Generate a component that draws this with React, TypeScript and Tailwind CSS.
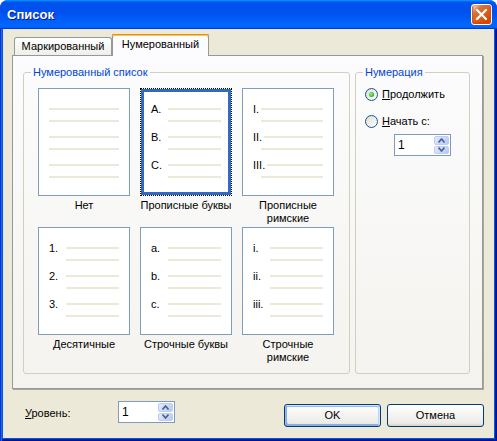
import React from "react";

function Line({ className = "" }: { className?: string }) {
  return <div className={"h-[2px] bg-[#ECE9D8] " + className} />;
}

function PlainLines() {
  return (
    <div className="flex flex-col px-[10px] pt-[19px]">
      <Line />
      <Line className="mt-[10px]" />
      <Line className="mt-[14px]" />
      <Line className="mt-[10px]" />
      <Line className="mt-[14px]" />
      <Line className="mt-[10px]" />
    </div>
  );
}

function Labeled({ labels, tight }: { labels: string[]; tight?: boolean }) {
  return (
    <div className="flex flex-col">
      {labels.map((l, i) => (
        <div key={i} className={i > 0 ? "mt-[14px]" : ""}>
          <div className="flex h-[2px] items-center">
            {tight ? (
              <span className="shrink-0 pr-[2px] leading-[13px]">{l}</span>
            ) : (
              <span className="w-[17px] shrink-0 leading-[13px]">{l}</span>
            )}
            <div className="h-[2px] flex-1 bg-[#ECE9D8]" />
          </div>
          <div className={(tight ? "ml-[8px]" : "ml-[17px]") + " mt-[10px] h-[2px] bg-[#ECE9D8]"} />
        </div>
      ))}
    </div>
  );
}

function Box({ children, selected }: { children: React.ReactNode; selected?: boolean }) {
  if (selected) {
    return (
      <div className="h-[108px] w-[92px] border border-dotted border-black bg-white">
        <div className="h-full w-full border-[3px] border-[#316AC5] bg-white px-[7px] pt-[16px]">{children}</div>
      </div>
    );
  }
  return <div className="h-[108px] w-[92px] border border-[#7F9DB9] bg-white">{children}</div>;
}

function Cell({ box, label }: { box: React.ReactNode; label: React.ReactNode }) {
  return (
    <div className="flex flex-col">
      {box}
      <div className="mt-[3px] h-[26px] text-center leading-[13px]">{label}</div>
    </div>
  );
}

function SpinArrow({ up }: { up?: boolean }) {
  return (
    <svg width="7" height="5" viewBox="0 0 7 5">
      {up ? (
        <path d="M0.5 4.5 L3.5 1 L6.5 4.5" fill="none" stroke="#4D6185" strokeWidth="1.6" />
      ) : (
        <path d="M0.5 0.5 L3.5 4 L6.5 0.5" fill="none" stroke="#4D6185" strokeWidth="1.6" />
      )}
    </svg>
  );
}

function Spin() {
  return (
    <div className="flex h-[22px] w-[57px] border border-[#7F9DB9] bg-white">
      <span className="flex-1 pl-[3px] text-[12px] leading-[20px]">1</span>
      <div className="my-[1px] mr-[1px] flex w-[15px] flex-col gap-[1px]">
        <div className="flex flex-1 items-center justify-center rounded-[2px] border border-[#bccdf7] bg-[linear-gradient(135deg,#e3ebfd,#b6c9f5)]">
          <SpinArrow up />
        </div>
        <div className="flex flex-1 items-center justify-center rounded-[2px] border border-[#bccdf7] bg-[linear-gradient(135deg,#e3ebfd,#b6c9f5)]">
          <SpinArrow />
        </div>
      </div>
    </div>
  );
}

function Radio({ checked, children }: { checked?: boolean; children: React.ReactNode }) {
  return (
    <div className="flex h-[13px] items-center">
      <div className="flex h-[13px] w-[13px] shrink-0 items-center justify-center rounded-full border border-[#1C5180] bg-[linear-gradient(135deg,#dcdcd7,#ffffff)]">
        {checked && (
          <div className="h-[5px] w-[5px] rounded-full bg-[radial-gradient(circle_at_40%_40%,#a6f39e,#2fbd2a_60%,#14931a)]" />
        )}
      </div>
      <span className="ml-[4px] leading-[13px]">{children}</span>
    </div>
  );
}

export default function App() {
  return (
    <div className="h-[441px] w-[497px] bg-white font-['Liberation_Sans',Arial,sans-serif] text-[11px] leading-[13px] text-black">
      <div className="flex h-full flex-col overflow-hidden rounded-t-[8px] bg-[#0855dd]">
        {/* Title bar */}
        <div className="flex h-[29px] shrink-0 items-center bg-[linear-gradient(180deg,#0997ff,#0053ee_8%,#0050ee_40%,#0066ff_88%,#0066ff_93%,#005bff_95%,#003dd7_96%,#003dd7)] pl-[7px] pr-[5px]">
          <span className="text-[13px] font-bold leading-[16px] text-white [text-shadow:1px_1px_0_#0a1883]">Список</span>
          <div className="ml-auto flex h-[21px] w-[21px] items-center justify-center rounded-[3px] border border-white bg-[radial-gradient(circle_at_90%_90%,#cc4600_0%,#dc6527_55%,#cd7546_70%,#ffccb2_90%,#ffffff_100%)] shadow-[inset_0_-1px_2px_1px_#da4600]">
            <svg width="11" height="11" viewBox="0 0 11 11">
              <path d="M1 1 L10 10 M10 1 L1 10" stroke="white" strokeWidth="2.2" strokeLinecap="square" />
            </svg>
          </div>
        </div>
        {/* Frame body */}
        <div className="flex flex-1 flex-col px-[3px] pb-[3px] shadow-[inset_1px_0_#0831d9,inset_2px_0_#166aee,inset_-1px_-1px_#00138c,inset_-2px_-2px_#001ea0]">
          <div className="flex flex-1 flex-col bg-[#ECE9D8]">
            {/* Tabs */}
            <div className="ml-[11px] flex h-[26px] items-end pt-[5px]">
              <div className="flex h-[18px] w-[98px] items-center justify-center rounded-t-[3px] border border-b-0 border-[#919B9C] bg-[linear-gradient(180deg,#ffffff,#fafaf9_26%,#f0f0ea_95%,#ecebe6)]">
                Маркированный
              </div>
              <div className="relative z-10 mb-[-1px] flex h-[22px] w-[97px] items-start justify-center rounded-t-[3px] border-x border-[#919B9C] bg-[#FCFCFE] pt-[3px] shadow-[inset_0_2px_#ffc83c] before:absolute before:left-[-1px] before:right-[-1px] before:top-0 before:h-[1px] before:rounded-t-[3px] before:bg-[#e68b2c]">
                <span className="mt-[1px] leading-[13px]">Нумерованный</span>
              </div>
            </div>
            {/* Panel */}
            <div className="ml-[9px] flex h-[334px] w-[471px] border border-[#919B9C] bg-[linear-gradient(180deg,#fcfcfe,#f4f3ee)] pb-[14px] pl-[10px] pt-[9px] shadow-[1px_1px_0_#aca899]">
              <fieldset className="w-[327px] rounded-[3px] border border-[#D0D0BF]">
                <legend className="ml-[7px] px-[2px] leading-[14px] text-[#0046D5]">Нумерованный список</legend>
                <div className="grid grid-cols-[92px_92px_92px] gap-x-[10px] gap-y-[2px] pl-[14px] pt-[9px]">
                  <Cell box={<Box><PlainLines /></Box>} label="Нет" />
                  <Cell
                    box={
                      <Box selected>
                        <Labeled labels={["A.", "B.", "C."]} />
                      </Box>
                    }
                    label="Прописные буквы"
                  />
                  <Cell
                    box={
                      <Box>
                        <div className="px-[10px] pt-[19px]">
                          <Labeled labels={["I.", "II.", "III."]} tight />
                        </div>
                      </Box>
                    }
                    label={
                      <>
                        Прописные
                        <br />
                        римские
                      </>
                    }
                  />
                  <Cell
                    box={
                      <Box>
                        <div className="px-[10px] pt-[19px]">
                          <Labeled labels={["1.", "2.", "3."]} />
                        </div>
                      </Box>
                    }
                    label="Десятичные"
                  />
                  <Cell
                    box={
                      <Box>
                        <div className="px-[10px] pt-[19px]">
                          <Labeled labels={["a.", "b.", "c."]} />
                        </div>
                      </Box>
                    }
                    label="Строчные буквы"
                  />
                  <Cell
                    box={
                      <Box>
                        <div className="px-[10px] pt-[19px]">
                          <Labeled labels={["i.", "ii.", "iii."]} />
                        </div>
                      </Box>
                    }
                    label={
                      <>
                        Строчные
                        <br />
                        римские
                      </>
                    }
                  />
                </div>
              </fieldset>
              <fieldset className="ml-[5px] w-[115px] rounded-[3px] border border-[#D0D0BF]">
                <legend className="ml-[7px] px-[2px] leading-[14px] text-[#0046D5]">Нумерация</legend>
                <div className="flex flex-col pl-[9px] pt-[9px]">
                  <Radio checked>
                    <span className="underline">П</span>родолжить
                  </Radio>
                  <div className="mt-[14px]">
                    <Radio>
                      <span className="underline">Н</span>ачать с:
                    </Radio>
                  </div>
                  <div className="ml-[29px] mt-[6px]">
                    <Spin />
                  </div>
                </div>
              </fieldset>
            </div>
            {/* Bottom row */}
            <div className="mt-[12px] flex items-start pl-[22px] pr-[10px]">
              <div className="mt-[6px] w-[93px] leading-[13px]">
                <span className="underline">У</span>ровень:
              </div>
              <Spin />
              <div className="ml-auto mt-[3px] flex gap-[6px]">
                <button className="flex h-[23px] w-[97px] items-center justify-center rounded-[3px] border border-[#003C74] bg-[linear-gradient(180deg,#ffffff,#ecebe6_86%,#d6d0c5)] shadow-[inset_-1px_1px_#cee7ff,inset_1px_2px_#98b8ea,inset_-2px_2px_#bcd4f6,inset_1px_-1px_#89ade4,inset_2px_-2px_#89ade4]">
                  OK
                </button>
                <button className="flex h-[23px] w-[97px] items-center justify-center rounded-[3px] border border-[#003C74] bg-[linear-gradient(180deg,#ffffff,#ecebe6_86%,#d6d0c5)]">
                  Отмена
                </button>
              </div>
            </div>
          </div>
        </div>
      </div>
    </div>
  );
}
